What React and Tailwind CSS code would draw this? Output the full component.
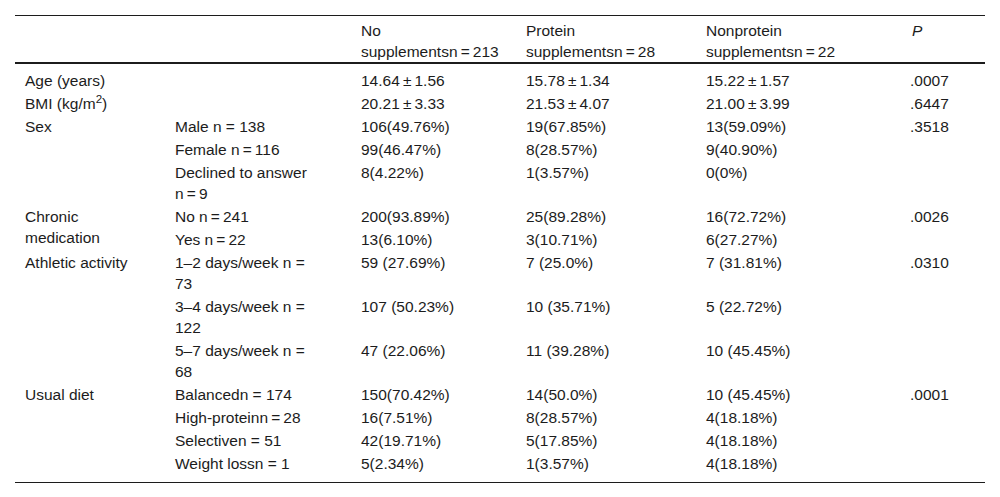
import React from "react";

const T = "\u2009";

const groups = [
  {
    label: "Age (years)",
    rows: [["", `14.64${T}±${T}1.56`, `15.78${T}±${T}1.34`, `15.22${T}±${T}1.57`]],
    p: ".0007",
  },
  {
    label: (
      <>
        BMI (kg/m<sup>2</sup>)
      </>
    ),
    rows: [["", `20.21${T}±${T}3.33`, `21.53${T}±${T}4.07`, `21.00${T}±${T}3.99`]],
    p: ".6447",
  },
  {
    label: "Sex",
    rows: [
      ["Male n = 138", "106(49.76%)", "19(67.85%)", "13(59.09%)"],
      [`Female n${T}=${T}116`, "99(46.47%)", "8(28.57%)", "9(40.90%)"],
      [
        <>
          Declined to answer
          <br />n{T}={T}9
        </>,
        "8(4.22%)",
        "1(3.57%)",
        "0(0%)",
      ],
    ],
    p: ".3518",
  },
  {
    label: (
      <>
        Chronic
        <br />
        medication
      </>
    ),
    rows: [
      [`No n${T}=${T}241`, "200(93.89%)", "25(89.28%)", "16(72.72%)"],
      [`Yes n${T}=${T}22`, "13(6.10%)", "3(10.71%)", "6(27.27%)"],
    ],
    p: ".0026",
  },
  {
    label: "Athletic activity",
    rows: [
      [
        <>
          1–2 days/week n =<br />
          73
        </>,
        "59 (27.69%)",
        "7 (25.0%)",
        "7 (31.81%)",
      ],
      [
        <>
          3–4 days/week n =<br />
          122
        </>,
        "107 (50.23%)",
        "10 (35.71%)",
        "5 (22.72%)",
      ],
      [
        <>
          5–7 days/week n =<br />
          68
        </>,
        "47 (22.06%)",
        "11 (39.28%)",
        "10 (45.45%)",
      ],
    ],
    p: ".0310",
  },
  {
    label: "Usual diet",
    rows: [
      ["Balancedn = 174", "150(70.42%)", "14(50.0%)", "10 (45.45%)"],
      [`High-proteinn${T}=${T}28`, "16(7.51%)", "8(28.57%)", "4(18.18%)"],
      ["Selectiven = 51", "42(19.71%)", "5(17.85%)", "4(18.18%)"],
      ["Weight lossn = 1", "5(2.34%)", "1(3.57%)", "4(18.18%)"],
    ],
    p: ".0001",
  },
];

function Cell({ children, className = "", ...rest }) {
  return (
    <td className={"pl-[10px] pr-2 py-px align-top text-left " + className} {...rest}>
      {children}
    </td>
  );
}

export default function App() {
  const total = groups.length;
  return (
    <div className="min-h-screen bg-white pt-[15px] pl-[15px] text-[#1c1c1c] text-[15.5px] leading-[21px] font-['Liberation_Sans',Arial,sans-serif]">
      <table className="w-[970px] border-collapse table-fixed">
        <colgroup>
          <col className="w-[150px]" />
          <col className="w-[186px]" />
          <col className="w-[165px]" />
          <col className="w-[180px]" />
          <col className="w-[204px]" />
          <col className="w-[85px]" />
        </colgroup>
        <thead>
          <tr className="border-t border-[#1c1c1c] border-b-2">
            <th className="pt-[4px] pb-0" />
            <th />
            <th className="pl-[10px] pt-[4px] text-left font-normal align-top">
              No
              <br />
              <span className="whitespace-nowrap">supplementsn{T}={T}213</span>
            </th>
            <th className="pl-[10px] pt-[4px] text-left font-normal align-top">
              Protein
              <br />
              <span className="whitespace-nowrap">supplementsn{T}={T}28</span>
            </th>
            <th className="pl-[10px] pt-[4px] text-left font-normal align-top">
              Nonprotein
              <br />
              <span className="whitespace-nowrap">supplementsn{T}={T}22</span>
            </th>
            <th className="pl-[12px] pt-[4px] text-left font-normal italic align-top">P</th>
          </tr>
        </thead>
        <tbody className="border-b border-[#1c1c1c]">
          {groups.map((g, gi) =>
            g.rows.map((r, ri) => {
              const first = gi === 0 && ri === 0;
              const last = gi === total - 1 && ri === g.rows.length - 1;
              const pad = (first ? "pt-[6px] " : "") + (last ? "pb-[8px]" : "");
              return (
                <tr key={gi + "-" + ri}>
                  {ri === 0 && (
                    <Cell rowSpan={g.rows.length} className={pad}>
                      {g.label}
                    </Cell>
                  )}
                  {r.map((c, ci) => (
                    <Cell key={ci} className={pad}>
                      {c}
                    </Cell>
                  ))}
                  {ri === 0 && (
                    <Cell rowSpan={g.rows.length} className={pad}>
                      {g.p}
                    </Cell>
                  )}
                </tr>
              );
            })
          )}
        </tbody>
      </table>
    </div>
  );
}
